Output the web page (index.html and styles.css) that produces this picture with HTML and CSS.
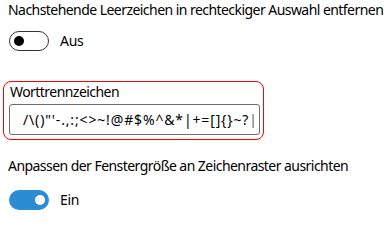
FILE: index.html
```html
<!DOCTYPE html>
<html lang="de">
<head>
<meta charset="utf-8">
<link rel="stylesheet" href="styles.css">
</head>
<body>
<div class="page">
  <div class="setting">
    <div class="label">Nachstehende Leerzeichen in rechteckiger Auswahl entfernen</div>
    <div class="toggle-row">
      <span class="toggle off"><span class="knob"></span></span>
      <span class="state">Aus</span>
    </div>
  </div>
  <div class="focus-box">
    <div class="label">Worttrennzeichen</div>
    <div class="textbox">/\()"'-.,:;&lt;&gt;~!@#$%^&amp;*|+=[]{}~?<span class="caret">|</span></div>
  </div>
  <div class="setting second">
    <div class="label">Anpassen der Fenstergröße an Zeichenraster ausrichten</div>
    <div class="toggle-row">
      <span class="toggle on"><span class="knob"></span></span>
      <span class="state">Ein</span>
    </div>
  </div>
</div>
</body>
</html>
```
FILE: styles.css
```css
html, body {
  margin: 0;
  padding: 0;
  background: #ffffff;
}
body {
  width: 392px;
  height: 212px;
  overflow: hidden;
  font-family: "Noto Sans", "Open Sans", sans-serif;
  font-size: 14px;
  color: #000000;
}
.page {
  display: flex;
  flex-direction: column;
  padding: 0 0 0 8px;
}
.label {
  line-height: 20px;
  height: 20px;
  white-space: nowrap;
  letter-spacing: -0.55px;
}
.toggle-row {
  display: flex;
  align-items: center;
  margin-top: 11px;
  height: 20px;
}
.toggle {
  box-sizing: border-box;
  width: 40px;
  height: 20px;
  border-radius: 10px;
  display: flex;
  align-items: center;
  padding: 0 4px;
  margin-left: 1px;
}
.toggle.off {
  border: 1px solid #333333;
  background: #ffffff;
  justify-content: flex-start;
}
.toggle.on {
  background: #2b8cd3;
  justify-content: flex-end;
}
.knob {
  width: 10px;
  height: 10px;
  border-radius: 50%;
}
.toggle.off .knob { background: #000000; }
.toggle.on .knob { background: #ffffff; }
.state {
  margin-left: 11px;
  line-height: 20px;
  letter-spacing: -0.3px;
}
.focus-box {
  box-sizing: border-box;
  margin-top: 30px;
  margin-left: -5px;
  width: 261px;
  height: 59px;
  border: 1px solid #ff0000;
  border-radius: 8px;
  padding: 0 4px 0 5px;
  display: flex;
  flex-direction: column;
}
.focus-box .label {
  padding-left: 1px;
}
.textbox {
  box-sizing: border-box;
  margin-top: 2px;
  width: 251px;
  height: 31px;
  border: 1px solid #6e6e6e;
  border-radius: 3px;
  padding: 0 0 0 13px;
  line-height: 29px;
  white-space: nowrap;
  overflow: hidden;
  letter-spacing: 0.85px;
}
.caret {
  font-weight: 300;
}
.second {
  margin-top: 16px;
}
.second .toggle-row {
  margin-top: 14px;
}
```
